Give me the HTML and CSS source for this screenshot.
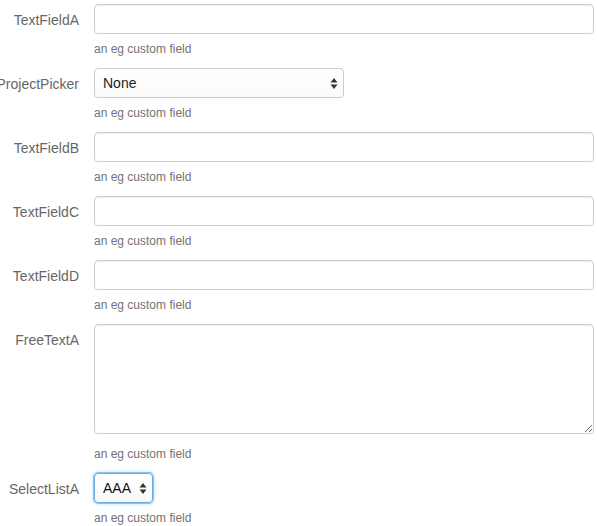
FILE: index.html
```html
<!DOCTYPE html>
<html>
<head>
<meta charset="utf-8">
<link rel="stylesheet" href="styles.css">
</head>
<body>
<form class="form">
  <div class="row">
    <div class="label"><span>TextFieldA</span></div>
    <div class="field">
      <input class="control" type="text">
      <div class="help">an eg custom field</div>
    </div>
  </div>
  <div class="row">
    <div class="label"><span>ProjectPicker</span></div>
    <div class="field">
      <div class="select wide"><span>None</span><svg class="arrows" width="8" height="13" viewBox="0 0 8 13"><path d="M4 1 L7.5 5.5 H0.5 Z M4 12 L7.5 7.5 H0.5 Z" fill="#333"/></svg></div>
      <div class="help">an eg custom field</div>
    </div>
  </div>
  <div class="row">
    <div class="label"><span>TextFieldB</span></div>
    <div class="field">
      <input class="control" type="text">
      <div class="help">an eg custom field</div>
    </div>
  </div>
  <div class="row">
    <div class="label"><span>TextFieldC</span></div>
    <div class="field">
      <input class="control" type="text">
      <div class="help">an eg custom field</div>
    </div>
  </div>
  <div class="row">
    <div class="label"><span>TextFieldD</span></div>
    <div class="field">
      <input class="control" type="text">
      <div class="help">an eg custom field</div>
    </div>
  </div>
  <div class="row">
    <div class="label"><span>FreeTextA</span></div>
    <div class="field">
      <textarea class="control area"></textarea>
      <div class="help">an eg custom field</div>
    </div>
  </div>
  <div class="row">
    <div class="label"><span>SelectListA</span></div>
    <div class="field">
      <div class="select small focus"><span>AAA</span><svg class="arrows" width="8" height="13" viewBox="0 0 8 13"><path d="M4 1 L7.5 5.5 H0.5 Z M4 12 L7.5 7.5 H0.5 Z" fill="#333"/></svg></div>
      <div class="help">an eg custom field</div>
    </div>
  </div>
</form>
</body>
</html>
```
FILE: styles.css
```css
html, body {
  margin: 0;
  padding: 0;
  background: #fff;
}
body {
  font-family: "Liberation Sans", Arial, Helvetica, sans-serif;
  overflow: hidden;
}
.form {
  padding-top: 4px;
  display: flex;
  flex-direction: column;
}
.row {
  display: grid;
  grid-template-columns: 79px 500px;
  column-gap: 15px;
  margin-bottom: 10px;
}
.label {
  display: flex;
  justify-content: flex-end;
  font-size: 14px;
  line-height: 20px;
  padding-top: 6px;
  color: #666;
  white-space: nowrap;
  min-width: 0;
}
.field {
  display: flex;
  flex-direction: column;
  align-items: flex-start;
}
.control {
  box-sizing: border-box;
  width: 500px;
  height: 30px;
  margin: 0;
  border: 1px solid #ccc;
  border-radius: 4px;
  box-shadow: inset 0 1px 1px rgba(0,0,0,0.075);
  background: #fff;
  font-family: inherit;
  font-size: 14px;
  padding: 4px 8px;
  outline: none;
}
.area {
  height: 110px;
  margin-bottom: 5px;
  resize: vertical;
}
.help {
  margin-top: 7px;
  font-size: 12px;
  line-height: 17px;
  color: #737373;
}
.select {
  box-sizing: border-box;
  height: 30px;
  border: 1px solid #ccc;
  border-radius: 4px;
  background: linear-gradient(#fff, #fafafa);
  display: flex;
  align-items: center;
  justify-content: space-between;
  font-size: 14px;
  color: #222;
  padding: 0 5px 0 8px;
}
.wide {
  width: 250px;
}
.small {
  width: 59px;
  height: 30px;
}
.focus {
  border-color: #66afe9;
  box-shadow: 0 0 0 1px rgba(102,175,233,0.7), 0 0 4px rgba(102,175,233,0.6);
  color: #111;
}
.arrows {
  display: block;
}
```
